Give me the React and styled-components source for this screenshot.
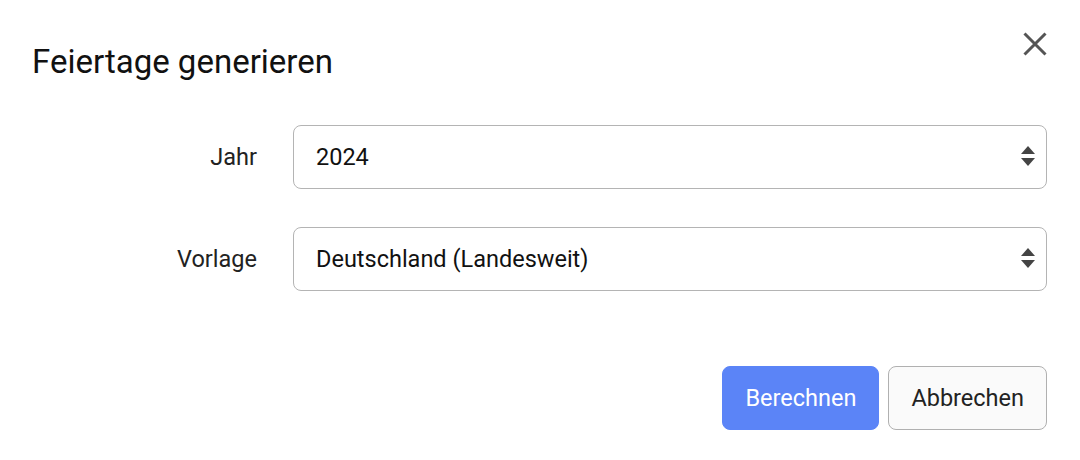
import React from "react";
import styled, { createGlobalStyle } from "styled-components";

const Global = createGlobalStyle`
  html, body { margin: 0; padding: 0; background: #fff; }
  body { font-family: Roboto, "Noto Sans", sans-serif; color: #111; }
`;

const Dialog = styled.div`
  width: 1080px;
  height: 460px;
  box-sizing: border-box;
  padding: 32px 33px 0 32px;
  background: #fff;
  display: flex;
  flex-direction: column;
`;

const Header = styled.div`
  display: flex;
  justify-content: space-between;
  align-items: flex-start;
  height: 93px;
`;

const Title = styled.h2`
  margin: 10px 0 0;
  font-size: 33px;
  font-weight: 400;
  line-height: 40px;
  color: #111;
`;

const CloseButton = styled.button`
  border: none;
  background: transparent;
  padding: 0;
  width: 24px;
  height: 24px;
  display: flex;
  align-items: center;
  justify-content: center;
  cursor: pointer;
`;

const Form = styled.div`
  display: grid;
  grid-template-columns: 225px 1fr;
  column-gap: 36px;
  row-gap: 38px;
`;

const Label = styled.label`
  justify-self: end;
  align-self: center;
  font-size: 23.5px;
  color: #222;
`;

const SelectBox = styled.div`
  position: relative;
  height: 64px;
  box-sizing: border-box;
  border: 1px solid #b4b4b4;
  border-radius: 8px;
  display: flex;
  align-items: center;
  padding: 0 22px;
  font-size: 23.5px;
  color: #111;
`;

const Arrows = styled.svg`
  position: absolute;
  right: 10px;
  top: 50%;
  transform: translateY(-50%);
`;

const Footer = styled.div`
  display: flex;
  justify-content: flex-end;
  gap: 9px;
  margin-top: 75px;
`;

const Button = styled.button`
  height: 64px;
  box-sizing: border-box;
  padding: 0 22px;
  border-radius: 8px;
  font-family: Roboto, "Noto Sans", sans-serif;
  font-size: 23.5px;
  border: 1px solid ${(p) => (p.$primary ? "#5b84f7" : "#b0b0b0")};
  background: ${(p) => (p.$primary ? "#5b84f7" : "#fafafa")};
  color: ${(p) => (p.$primary ? "#fff" : "#222")};
  cursor: pointer;
`;

const SelectArrows = () => (
  <Arrows width="16" height="22" viewBox="0 0 16 22">
    <path d="M1 8 L8 0 L15 8 Z" fill="#444" />
    <path d="M1 12 L15 12 L8 20 Z" fill="#444" />
  </Arrows>
);

export default function App() {
  return (
    <>
      <Global />
      <Dialog>
        <Header>
          <Title>Feiertage generieren</Title>
          <CloseButton aria-label="Schließen">
            <svg width="24" height="24" viewBox="0 0 24 24">
              <path d="M1.5 1.5 L22.5 22.5 M22.5 1.5 L1.5 22.5" stroke="#555" strokeWidth="3" />
            </svg>
          </CloseButton>
        </Header>
        <Form>
          <Label>Jahr</Label>
          <SelectBox>
            2024
            <SelectArrows />
          </SelectBox>
          <Label>Vorlage</Label>
          <SelectBox>
            Deutschland (Landesweit)
            <SelectArrows />
          </SelectBox>
        </Form>
        <Footer>
          <Button $primary>Berechnen</Button>
          <Button>Abbrechen</Button>
        </Footer>
      </Dialog>
    </>
  );
}
